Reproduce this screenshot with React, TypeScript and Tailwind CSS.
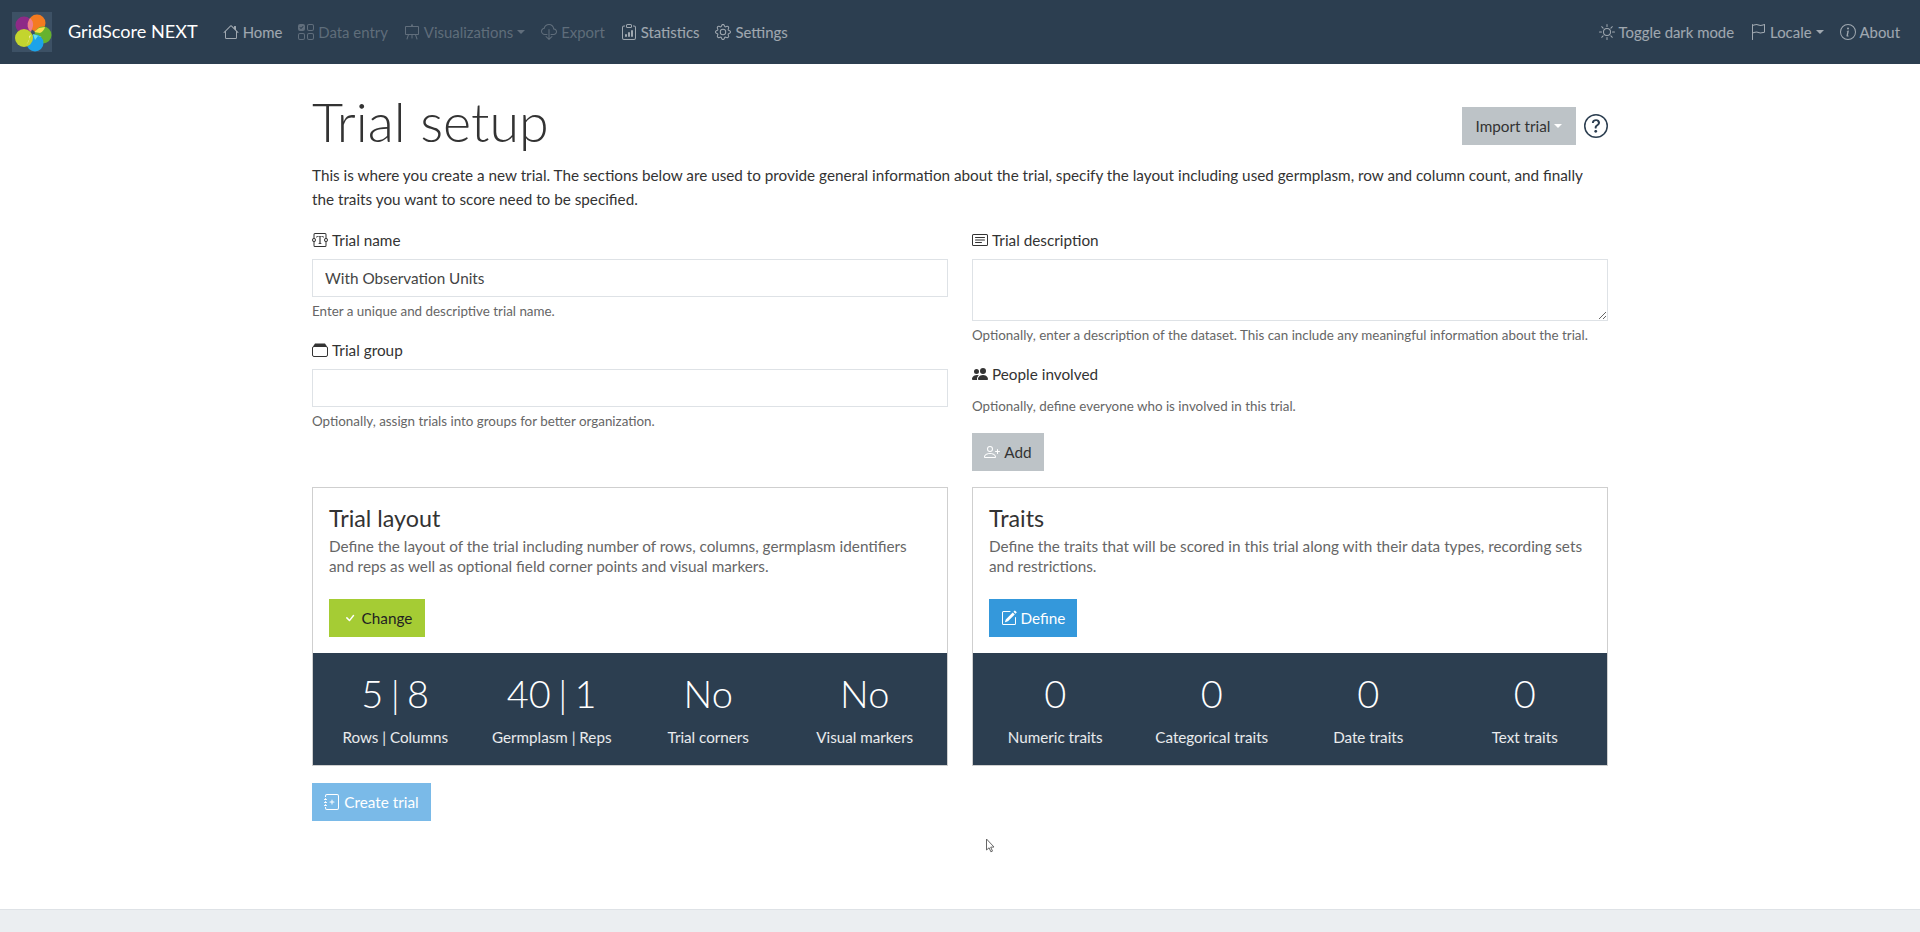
import React from "react";
import {
  BsHouse, BsUiChecksGrid, BsEasel, BsCloudDownload, BsClipboardData, BsGear, BsSun, BsFlag, BsInfoCircle,
  BsQuestionCircle, BsTextareaT, BsCardText, BsPeopleFill, BsPersonPlus, BsCheck, BsPencilSquare, BsJournalPlus,
} from "react-icons/bs";

const Caret = ({ className = "" }: { className?: string }) => (
  <span className={`inline-block w-0 h-0 border-x-[4px] border-x-transparent border-t-[4.5px] ${className}`} />
);

function Logo() {
  return (
    <div className="w-[40px] h-[40px] bg-[#3d5165] shrink-0">
      <svg width="40" height="40" viewBox="0 0 40 40">
        <circle cx="12" cy="13" r="8.5" fill="#8e2a87" />
        <circle cx="25" cy="11" r="8.5" fill="#f47b20" />
        <circle cx="31" cy="23" r="8.5" fill="#66b22e" />
        <circle cx="23" cy="31" r="8.5" fill="#1ca3ea" />
        <circle cx="12" cy="26" r="9" fill="#c3d52e" />
        <path d="M18 6 A9 9 0 0 1 21 14 L19 20 A9 9 0 0 1 17 8Z" fill="#ef7f8a" />
        <path d="M27 16 L33 15 A9 9 0 0 1 28 21 L22 20Z" fill="#f6e24a" />
        <path d="M21 22 L30 25 A9 9 0 0 1 26 24 L23 28Z" fill="#6fe0e6" />
        <path d="M19 23 L16 30 A9 9 0 0 1 14 33 A9 9 0 0 0 17 24Z" fill="#f1eda2" />
      </svg>
    </div>
  );
}

function NavItem({ icon, label, dim, caret }: { icon: React.ReactNode; label: string; dim?: boolean; caret?: boolean }) {
  return (
    <a className={`flex items-center gap-[4px] text-[14.9px] ${dim ? "text-white/25" : "text-white/55"}`}>
      <span className="text-[16px]">{icon}</span>
      <span>{label}</span>
      {caret && <Caret className="border-t-current" />}
    </a>
  );
}

function Field({ icon, label }: { icon: React.ReactNode; label: string }) {
  return (
    <label className="flex items-center gap-[4px] h-[24px] mb-[7px] text-[15.3px] text-[#333]">
      <span className="text-[16px]">{icon}</span>
      {label}
    </label>
  );
}

function GroupIcon() {
  return (
    <svg width="16" height="16" viewBox="0 0 16 16" fill="currentColor">
      <path d="M3 1.5h10l2 3H1z" />
      <rect x="0.5" y="4.5" width="15" height="10" rx="1.5" fill="none" stroke="currentColor" />
    </svg>
  );
}

function Stat({ big, small }: { big: string; small: string }) {
  return (
    <div className="flex-1 text-center text-white">
      <div className="text-[38px] leading-[48px] font-light [word-spacing:-3px]">{big}</div>
      <div className="text-[15.2px] leading-[24px] mt-[8px] text-white/90">{small}</div>
    </div>
  );
}

function Card({ title, text, button, stats }: { title: string; text: string; button: React.ReactNode; stats: [string, string][] }) {
  return (
    <div className="border border-[#cfcfcf] flex flex-col">
      <div className="p-[16px] h-[165px]">
        <h5 className="text-[23.3px] leading-[29px] mb-[3px] text-[#333]">{title}</h5>
        <p className="text-[15.3px] leading-[20px] text-[#666] mb-[23px]">{text}</p>
        {button}
      </div>
      <div className="bg-[#2c3e50] h-[112px] flex items-start pt-[16px] px-[4px]">
        {stats.map(([b, s]) => <Stat key={s} big={b} small={s} />)}
      </div>
    </div>
  );
}

export default function App() {
  return (
    <div className="relative min-h-[932px] bg-white flex flex-col text-[#333]" style={{ fontFamily: '"Lato", "Open Sans", sans-serif' }}>
      <nav className="h-[64px] bg-[#2c3e50] flex items-center pl-[12px] pr-[20px]">
        <Logo />
        <span className="text-white text-[18.1px] ml-[16px] mr-[25px]">GridScore NEXT</span>
        <div className="flex items-center gap-[16px]">
          <NavItem icon={<BsHouse />} label="Home" />
          <NavItem icon={<BsUiChecksGrid />} label="Data entry" dim />
          <NavItem icon={<BsEasel />} label="Visualizations" dim caret />
          <NavItem icon={<BsCloudDownload />} label="Export" dim />
          <NavItem icon={<BsClipboardData />} label="Statistics" />
          <NavItem icon={<BsGear />} label="Settings" />
        </div>
        <div className="ml-auto flex items-center gap-[16px]">
          <NavItem icon={<BsSun />} label="Toggle dark mode" />
          <NavItem icon={<BsFlag />} label="Locale" caret />
          <NavItem icon={<BsInfoCircle />} label="About" />
        </div>
      </nav>

      <main className="w-[1296px] mx-auto flex-1">
        <div className="flex items-start justify-between pt-[24px] h-[99px]">
          <h1 className="text-[53.8px] leading-[67px] font-light text-[#333]">Trial setup</h1>
          <div className="flex items-center gap-[8px] mt-[19px]">
            <button className="h-[38px] w-[114px] bg-[#bdc3c7] text-[15.3px] text-[#333] flex items-center justify-center gap-[4px]">
              Import trial <Caret className="border-t-white" />
            </button>
            <BsQuestionCircle className="text-[24px] text-[#2c3e50]" />
          </div>
        </div>
        <p className="text-[15.27px] leading-[24px] mb-[17px]">
          This is where you create a new trial. The sections below are used to provide general information about the trial, specify the layout including used germplasm, row and column count, and finally the traits you want to score need to be specified.
        </p>

        <div className="grid grid-cols-2 gap-x-[24px]">
          <div>
            <Field icon={<BsTextareaT />} label="Trial name" />
            <input readOnly value="With Observation Units" className="block w-full h-[38px] border border-[#dee2e6] px-[12px] text-[15.3px] text-[#444] outline-none" />
            <div className="text-[13.4px] leading-[21px] mt-[4px] text-[#666]">Enter a unique and descriptive trial name.</div>
            <div className="mt-[16px]">
              <Field icon={<GroupIcon />} label="Trial group" />
              <input readOnly className="block w-full h-[38px] border border-[#dee2e6] px-[12px] outline-none" />
              <div className="text-[13.4px] leading-[21px] mt-[4px] text-[#666]">Optionally, assign trials into groups for better organization.</div>
            </div>
          </div>
          <div>
            <Field icon={<BsCardText />} label="Trial description" />
            <textarea readOnly className="block w-full h-[62px] border border-[#dee2e6] px-[12px] outline-none" />
            <div className="text-[13.4px] leading-[21px] mt-[4px] text-[#666]">Optionally, enter a description of the dataset. This can include any meaningful information about the trial.</div>
            <div className="mt-[16px]">
              <Field icon={<BsPeopleFill />} label="People involved" />
              <div className="text-[13.4px] leading-[21px] mt-[10px] text-[#666]">Optionally, define everyone who is involved in this trial.</div>
              <button className="mt-[16px] h-[38px] w-[72px] bg-[#bdc3c7] text-[15.3px] text-[#333] flex items-center justify-center gap-[4px]"><BsPersonPlus className="text-white text-[16px]" />Add</button>
            </div>
          </div>
        </div>

        <div className="grid grid-cols-2 gap-x-[24px] mt-[16px]">
          <Card title="Trial layout" text="Define the layout of the trial including number of rows, columns, germplasm identifiers and reps as well as optional field corner points and visual markers."
            button={<button className="h-[38px] w-[96px] bg-[#a5cc34] text-[15.3px] text-[#222] flex items-center justify-center gap-[4px]"><BsCheck className="text-white text-[16px]" />Change</button>}
            stats={[["5 | 8", "Rows | Columns"], ["40 | 1", "Germplasm | Reps"], ["No", "Trial corners"], ["No", "Visual markers"]]} />
          <Card title="Traits" text="Define the traits that will be scored in this trial along with their data types, recording sets and restrictions."
            button={<button className="h-[38px] w-[88px] bg-[#3498db] text-[15.3px] text-white flex items-center justify-center gap-[4px]"><BsPencilSquare className="text-[16px]" />Define</button>}
            stats={[["0", "Numeric traits"], ["0", "Categorical traits"], ["0", "Date traits"], ["0", "Text traits"]]} />
        </div>

        <button className="mt-[17px] h-[38px] w-[119px] bg-[#7abae8] text-[15.3px] text-white flex items-center justify-center gap-[4px]"><BsJournalPlus className="text-[16px]" />Create trial</button>
      </main>

      <footer className="h-[23px] bg-[#ebeef1] border-t border-[#dee2e6]" />

      <svg className="absolute left-[985px] top-[838px]" width="12" height="16" viewBox="0 0 12 16">
        <path d="M1.5 1v11l2.6-2.2 1.8 4 1.6-.7-1.8-3.9 3.3-.2z" fill="#fff" stroke="#666" strokeWidth="1" />
      </svg>
    </div>
  );
}
